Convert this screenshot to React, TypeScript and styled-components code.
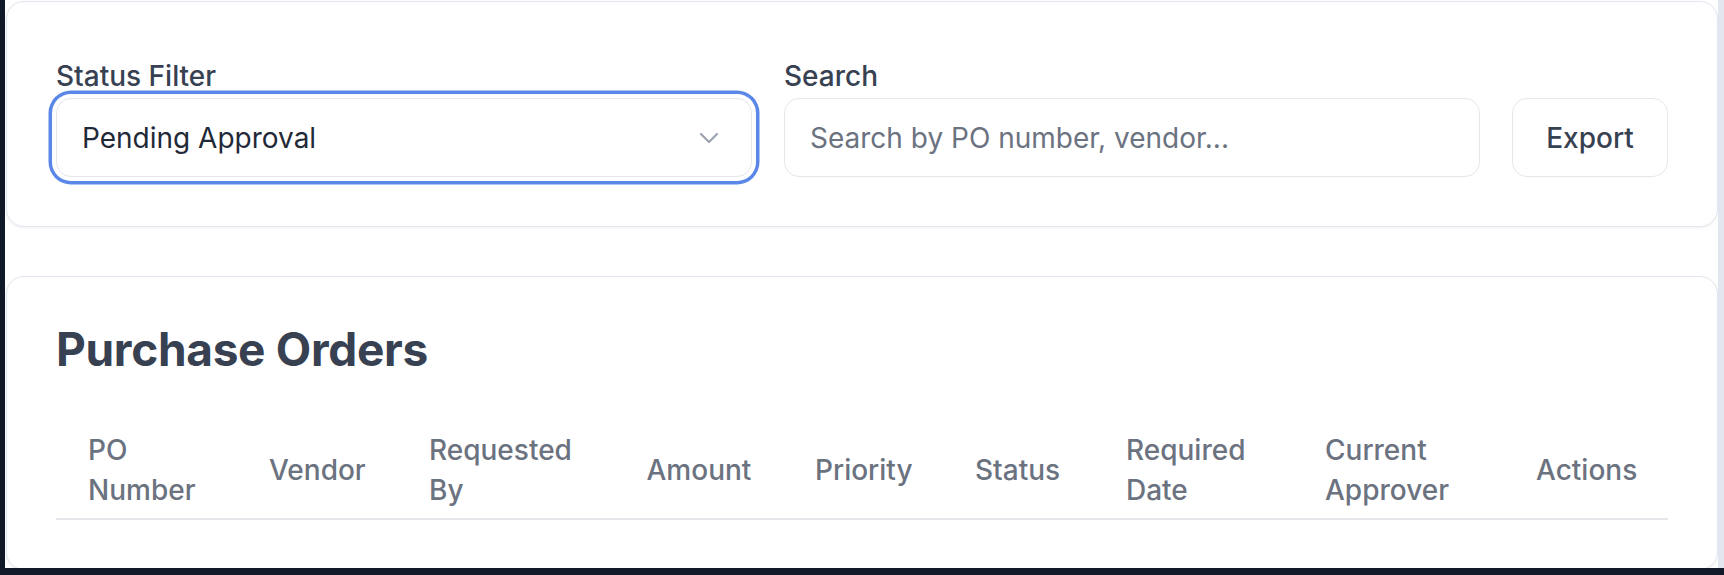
import React, { useState } from 'react';
import styled, { createGlobalStyle } from 'styled-components';

const GlobalStyle = createGlobalStyle`
  html, body {
    margin: 0;
    padding: 0;
    background: #111827;
    font-family: Inter, 'Noto Sans', 'Liberation Sans', sans-serif;
    -webkit-font-smoothing: antialiased;
  }
  * {
    box-sizing: border-box;
  }
`;

const Frame = styled.div`
  display: flex;
  height: 568px;
  margin-left: 5px;
`;

const Main = styled.main`
  flex: 1;
  display: flex;
  flex-direction: column;
  gap: 49px;
  padding: 1px 0 0 1px;
  background: #ffffff;
`;

const Track = styled.div`
  width: 7px;
  background: #e2e6ef;
`;

const Card = styled.section<{ $top?: number }>`
  background: #ffffff;
  border: 1px solid #e2e6ef;
  border-radius: 18px;
  box-shadow: 0 1px 3px rgba(15, 23, 42, 0.06);
  padding: ${(p) => p.$top ?? 49}px 49px 49px 49px;
`;

const FilterRow = styled.div`
  display: flex;
  align-items: flex-end;
  gap: 32px;
`;

const Field = styled.div`
  flex: 1;
  display: flex;
  flex-direction: column;
  gap: 2px;
`;

const Label = styled.label`
  font-size: 28px;
  line-height: 40px;
  font-weight: 500;
  color: #374151;
`;

const SelectWrap = styled.div<{ $focused?: boolean }>`
  position: relative;
  height: 79px;
  border: 1px solid #e5e7eb;
  border-radius: 15px;
  background: #ffffff;
  box-shadow: ${(p) =>
    p.$focused ? '0 0 0 4px #ffffff, 0 0 0 7.5px #5b87e8' : 'none'};
`;

const Select = styled.select`
  appearance: none;
  width: 100%;
  height: 100%;
  border: none;
  outline: none;
  background: transparent;
  padding: 0 70px 0 25px;
  font-family: inherit;
  font-size: 28px;
  color: #1f2937;
`;

const Chevron = styled.svg`
  position: absolute;
  right: 32px;
  top: 50%;
  width: 20px;
  height: 12px;
  margin-top: -6px;
  pointer-events: none;
`;

const SearchInput = styled.input`
  height: 79px;
  border: 1px solid #e5e7eb;
  border-radius: 15px;
  padding: 0 25px;
  font-family: inherit;
  font-size: 28px;
  color: #1f2937;
  outline: none;

  &::placeholder {
    color: #6b7280;
  }
`;

const ExportButton = styled.button`
  height: 79px;
  width: 156px;
  border: 1px solid #e5e7eb;
  border-radius: 15px;
  background: #ffffff;
  font-family: inherit;
  font-size: 28px;
  font-weight: 500;
  color: #374151;
  cursor: pointer;
`;

const Title = styled.h2`
  margin: 0 0 50px;
  font-size: 46px;
  line-height: 46px;
  font-weight: 700;
  color: #374151;
  letter-spacing: -0.3px;
`;

const Table = styled.table`
  width: 100%;
  border-collapse: collapse;
  table-layout: fixed;
`;

const HeadCell = styled.th<{ $nowrap?: boolean }>`
  padding: 8px 32px;
  text-align: left;
  vertical-align: middle;
  font-size: 28px;
  line-height: 40px;
  font-weight: 500;
  color: #6b7280;
  white-space: ${(p) => (p.$nowrap ? 'nowrap' : 'normal')};
  border-bottom: 2px solid #e5e7eb;
`;

const columns = [
  { label: 'PO Number', width: 181 },
  { label: 'Vendor', width: 160 },
  { label: 'Requested By', width: 217.5 },
  { label: 'Amount', width: 168.5 },
  { label: 'Priority', width: 160 },
  { label: 'Status', width: 151 },
  { label: 'Required Date', width: 199 },
  { label: 'Current Approver', width: 211 },
  { label: 'Actions', width: 164 },
];

export default function App() {
  const [status, setStatus] = useState('pending');
  const [query, setQuery] = useState('');

  return (
    <>
      <GlobalStyle />
      <Frame>
        <Main>
          <Card $top={54}>
            <FilterRow>
              <Field>
                <Label htmlFor="status">Status Filter</Label>
                <SelectWrap $focused>
                  <Select
                    id="status"
                    value={status}
                    onChange={(e) => setStatus(e.target.value)}
                  >
                    <option value="all">All</option>
                    <option value="pending">Pending Approval</option>
                    <option value="approved">Approved</option>
                    <option value="rejected">Rejected</option>
                  </Select>
                  <Chevron viewBox="0 0 20 12" fill="none">
                    <path
                      d="M2 2l8 8 8-8"
                      stroke="#9ca3af"
                      strokeWidth="2.2"
                      strokeLinecap="round"
                      strokeLinejoin="round"
                    />
                  </Chevron>
                </SelectWrap>
              </Field>
              <Field>
                <Label htmlFor="search">Search</Label>
                <SearchInput
                  id="search"
                  placeholder="Search by PO number, vendor..."
                  value={query}
                  onChange={(e) => setQuery(e.target.value)}
                />
              </Field>
              <ExportButton>Export</ExportButton>
            </FilterRow>
          </Card>
          <Card>
            <Title>Purchase Orders</Title>
            <Table>
              <colgroup>
                {columns.map((c) => (
                  <col key={c.label} style={{ width: c.width }} />
                ))}
              </colgroup>
              <thead>
                <tr>
                  {columns.map((c) => (
                    <HeadCell key={c.label} $nowrap={!c.label.includes(' ')}>
                      {c.label}
                    </HeadCell>
                  ))}
                </tr>
              </thead>
            </Table>
          </Card>
        </Main>
        <Track />
      </Frame>
    </>
  );
}
